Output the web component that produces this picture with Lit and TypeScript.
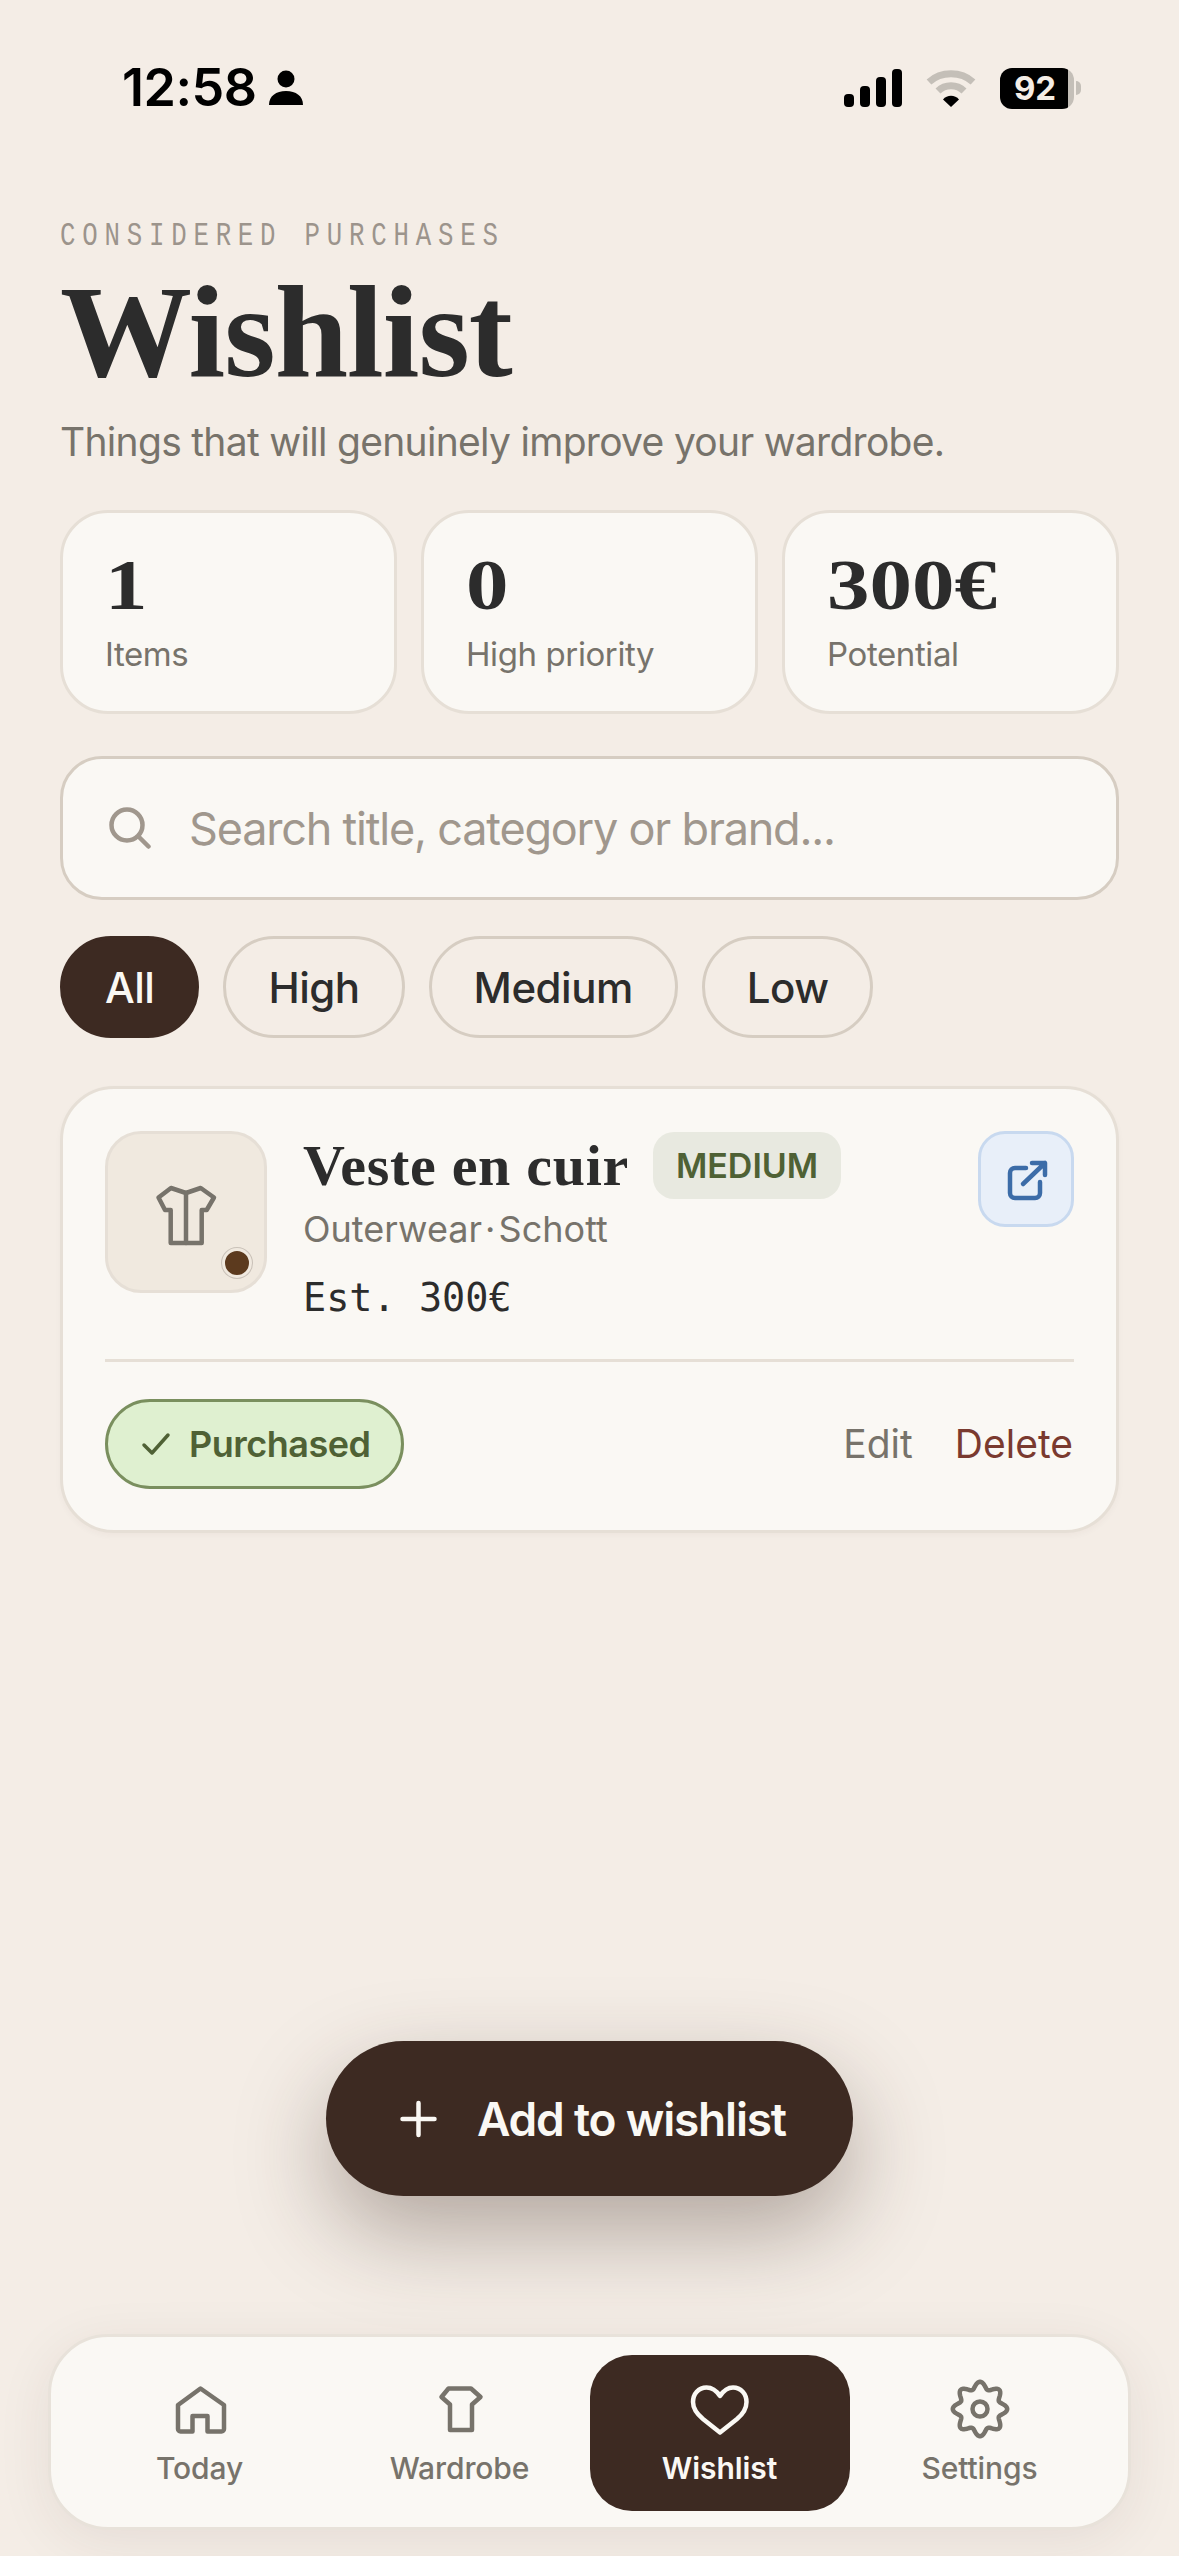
import { LitElement, html, css, svg } from "lit";
import { customElement } from "lit/decorators.js";

const gearPath = (() => {
  const pts: string[] = [];
  const n = 160;
  for (let i = 0; i <= n; i++) {
    const t = (i / n) * Math.PI * 2;
    const r = 23.8 + 3.4 * Math.cos(8 * t);
    pts.push(`${(36 + r * Math.sin(t)).toFixed(2)} ${(36 - r * Math.cos(t)).toFixed(2)}`);
  }
  return "M" + pts.join("L") + "Z";
})();

@customElement("app-root")
export class AppRoot extends LitElement {
  static styles = css`
    :host {
      display: block;
      position: relative;
      width: 1179px;
      height: 2556px;
      overflow: hidden;
      background: #f4ede6;
      font-family: Inter, "Liberation Sans", sans-serif;
      color: #2c2c2c;
    }
    svg { display: block; flex: none; fill: none; stroke-linecap: round; stroke-linejoin: round; }

    .status { display: flex; justify-content: space-between; align-items: center; height: 40px; padding: 68px 98px 0 122px; }
    .status-left { display: flex; align-items: center; gap: 12px; }
    .time { font-size: 52px; font-weight: 600; color: #000; letter-spacing: -0.5px; line-height: 40px; }
    .status-right { display: flex; align-items: center; gap: 24px; }
    .battery { display: flex; align-items: center; }
    .batt-body { width: 74px; height: 41px; border-radius: 12px; background: linear-gradient(90deg, #000 92%, #c4bfb8 92%); color: #f4ede6; font-size: 33px; font-weight: 700; display: flex; align-items: center; justify-content: center; padding-right: 4px; box-sizing: border-box; }
    .batt-tip { width: 5px; height: 14px; background: #c4bfb8; border-radius: 0 7px 7px 0; margin-left: 2px; }

    .content { padding: 111px 60px 0 60px; }
    .eyebrow { font-family: "Liberation Mono", monospace; font-size: 33px; letter-spacing: 8.7px; line-height: 36px; color: #9c948c; transform: scaleX(0.78); transform-origin: left center; white-space: nowrap; }
    h1 { margin: 0; font-family: "Liberation Serif", serif; font-weight: 700; font-size: 132px; line-height: 132px; margin-top: 11px; letter-spacing: -1px; color: #2c2c2c; }
    .sub { font-size: 39px; line-height: 52px; color: #77736b; margin-top: 18px; letter-spacing: -0.7px; }

    .stats { display: grid; grid-template-columns: repeat(3, 1fr); gap: 24px; margin-top: 42px; }
    .stat { height: 204px; box-sizing: border-box; border: 3px solid #e6dfd6; border-radius: 48px; background: #faf8f4; padding: 33px 42px; }
    .stat-value { font-family: "Liberation Serif", serif; font-weight: 700; font-size: 72px; line-height: 78px; transform: scaleX(1.18); transform-origin: left center; }
    .stat-label { font-size: 33px; line-height: 42px; color: #77736b; margin-top: 9px; letter-spacing: -0.4px; }

    .search { height: 144px; box-sizing: border-box; margin-top: 42px; border: 3px solid #d6cdc2; border-radius: 42px; background: #faf8f4; display: flex; align-items: center; gap: 38px; padding: 0 42px 0 46px; font-size: 45px; color: #a0978d; letter-spacing: -1.2px; }

    .chips { display: flex; gap: 24px; margin-top: 36px; }
    .chip { height: 102px; box-sizing: border-box; border: 3px solid #d6cdc2; border-radius: 51px; padding: 0 42px; display: flex; align-items: center; font-size: 42px; font-weight: 500; color: #2c2c2c; letter-spacing: -0.5px; }
    .chip.on { background: #3d2a22; border-color: #3d2a22; color: #faf8f4; }

    .card { margin-top: 48px; box-sizing: border-box; height: 447px; border: 3px solid #e6dfd6; border-radius: 54px; background: #faf8f4; padding: 42px 42px 0; box-shadow: 0 3px 6px rgba(60, 42, 33, 0.03); }
    .top { display: flex; gap: 36px; height: 228px; }
    .thumb { position: relative; width: 162px; height: 162px; box-sizing: border-box; border: 3px solid #e6dfd6; border-radius: 36px; background: #f0e9df; display: flex; align-items: center; justify-content: center; flex: none; }
    .dot { position: absolute; right: 12px; bottom: 12px; width: 24px; height: 24px; border-radius: 50%; background: #5c3a1e; border: 3px solid #f0e9df; box-shadow: 0 0 0 1px #c9c1b8; }
    .info { flex: 1; min-width: 0; }
    .title-row { display: flex; align-items: center; gap: 24px; height: 68px; }
    .title { font-family: "Liberation Serif", serif; font-weight: 700; font-size: 58px; letter-spacing: 0.7px; color: #2c2c2c; }
    .badge { height: 67px; box-sizing: border-box; padding: 0 23px; border-radius: 21px; background: #e8e9e0; color: #4f6135; font-weight: 600; font-size: 34px; display: flex; align-items: center; }
    .meta { font-size: 36px; line-height: 46px; color: #77736b; margin-top: 7px; letter-spacing: 0; word-spacing: -7px; }
    .price { font-family: "DejaVu Sans Mono", monospace; font-size: 38.5px; line-height: 46px; color: #2c2c2c; margin-top: 23px; }
    .ext { width: 96px; height: 96px; box-sizing: border-box; border: 3px solid #c8d9ef; border-radius: 27px; background: #e8eff9; display: flex; align-items: center; justify-content: center; flex: none; }
    .divider { height: 3px; background: #e6dfd6; }
    .bottom { display: flex; align-items: center; justify-content: space-between; margin-top: 37px; }
    .purchased { height: 90px; box-sizing: border-box; display: flex; align-items: center; gap: 15px; border: 3px solid #7a8f5e; border-radius: 45px; background: #dff0d0; color: #4f6135; font-weight: 600; font-size: 36px; padding: 0 31px 0 30px; letter-spacing: -0.5px; }
    .actions { display: flex; gap: 42px; font-size: 39px; color: #77736b; position: relative; top: -1px; left: -1px; }
    .del { color: #7a3a2f; }

    .fab { position: absolute; left: 326px; top: 2041px; width: 527px; height: 155px; box-sizing: border-box; padding-left: 69px; border-radius: 78px; background: #3d2a22; color: #faf8f4; display: flex; align-items: center; gap: 40px; font-size: 46px; font-weight: 600; letter-spacing: -1.2px; box-shadow: 0 36px 90px rgba(61, 42, 34, 0.36); }

    .nav { position: absolute; left: 48px; top: 2334px; width: 1083px; height: 196px; box-sizing: border-box; border: 3px solid #e8e2da; border-radius: 60px; background: #faf8f4; padding: 18px 18.5px 16px; display: grid; grid-template-columns: repeat(4, 1fr); box-shadow: 0 12px 54px rgba(61, 42, 34, 0.08); }
    .tab { display: flex; flex-direction: column; align-items: center; justify-content: flex-start; padding-top: 18px; border-radius: 42px; color: #77736b; font-size: 30px; line-height: 40px; font-weight: 500; letter-spacing: -0.1px; }
    .tab.on { background: #3d2a22; color: #faf8f4; font-weight: 600; }
    .tab span { margin-top: 3px; }
  `;

  private tab(label: string, icon: unknown, on = false) {
    return html`<div class="tab ${on ? "on" : ""}">${icon}<span>${label}</span></div>`;
  }

  render() {
    const grey = "#77736b";
    return html`
      <div class="status">
        <div class="status-left">
          <div class="time">12:58</div>
          <svg width="36" height="36" viewBox="0 0 36 36">
            <circle cx="18" cy="9" r="8.5" fill="#000"></circle>
            <path d="M1 35c0-9 7-14 17-14s17 5 17 14z" fill="#000"></path>
          </svg>
        </div>
        <div class="status-right">
          <svg width="58" height="38" viewBox="0 0 58 38">
            <rect x="0" y="25" width="10" height="13" rx="4" fill="#000"></rect>
            <rect x="16" y="17" width="10" height="21" rx="4" fill="#000"></rect>
            <rect x="32" y="8" width="10" height="30" rx="4" fill="#000"></rect>
            <rect x="48" y="0" width="10" height="38" rx="4" fill="#000"></rect>
          </svg>
          <svg width="50" height="38" viewBox="0 0 50 38">
            <path d="M3 13C15 2 35 2 47 13" stroke="#c4bfb8" stroke-width="7" stroke-linecap="butt"></path>
            <path d="M12 22C19 15 31 15 38 22" stroke="#c4bfb8" stroke-width="7" stroke-linecap="butt"></path>
            <path d="M17 30.5C21 25.5 29 25.5 33 30.5L25 38z" fill="#000"></path>
          </svg>
          <div class="battery"><div class="batt-body">92</div><div class="batt-tip"></div></div>
        </div>
      </div>

      <div class="content">
        <div class="eyebrow">CONSIDERED PURCHASES</div>
        <h1>Wishlist</h1>
        <div class="sub">Things that will genuinely improve your wardrobe.</div>

        <div class="stats">
          <div class="stat"><div class="stat-value">1</div><div class="stat-label">Items</div></div>
          <div class="stat"><div class="stat-value">0</div><div class="stat-label">High priority</div></div>
          <div class="stat"><div class="stat-value">300€</div><div class="stat-label">Potential</div></div>
        </div>

        <div class="search">
          <svg width="42" height="42" viewBox="0 0 42 42" stroke="#a0978d" stroke-width="4.5">
            <circle cx="18" cy="18" r="15.5"></circle>
            <path d="M29.5 29.5L39.5 39.5"></path>
          </svg>
          <span>Search title, category or brand...</span>
        </div>

        <div class="chips">
          <div class="chip on">All</div>
          <div class="chip">High</div>
          <div class="chip">Medium</div>
          <div class="chip">Low</div>
        </div>

        <div class="card">
          <div class="top">
            <div class="thumb">
              <svg width="72" height="72" viewBox="0 0 72 72" stroke="${grey}" stroke-width="4.5">
                <path d="M36 17L21 12L8.500 21.500L15 34H20.700V67H51.700V34H56.700L64 21.500L50.700 12Z"></path>
                <path d="M36 17V67"></path>
              </svg>
              <div class="dot"></div>
            </div>
            <div class="info">
              <div class="title-row">
                <div class="title">Veste en cuir</div>
                <div class="badge">MEDIUM</div>
              </div>
              <div class="meta">Outerwear · Schott</div>
              <div class="price">Est. 300€</div>
            </div>
            <div class="ext">
              <svg width="48" height="48" viewBox="0 0 48 48" stroke="#3c6ca8" stroke-width="4.500">
                <path d="M24 13H13a5 5 0 0 0-5 5v20a5 5 0 0 0 5 5h20a5 5 0 0 0 5-5V27"></path>
                <path d="M21 29L43 8M30 8H43V20"></path>
              </svg>
            </div>
          </div>
          <div class="divider"></div>
          <div class="bottom">
            <div class="purchased">
              <svg width="36" height="36" viewBox="0 0 36 36" stroke="#4f6135" stroke-width="3.500">
                <path d="M6 19L14 27L30 9"></path>
              </svg>
              <span>Purchased</span>
            </div>
            <div class="actions"><span>Edit</span><span class="del">Delete</span></div>
          </div>
        </div>
      </div>

      <div class="fab">
        <svg width="42" height="42" viewBox="0 0 42 42" stroke="#faf8f4" stroke-width="4.500">
          <path d="M23.500 5V37M7.500 21H39.500"></path>
        </svg>
        <span>Add to wishlist</span>
      </div>

      <div class="nav">
        ${this.tab("Today", html`<svg width="72" height="72" viewBox="0 0 72 72" stroke="${grey}" stroke-width="4.5">
          <path d="M14 32L36.500 15.500L60 32V56a2.500 2.500 0 0 1-2.500 2.500H43.500V43H28.500V58.500H16.500a2.500 2.500 0 0 1-2.500-2.500Z"></path>
        </svg>`)}
        ${this.tab("Wardrobe", html`<svg width="72" height="72" viewBox="0 0 72 72" stroke="${grey}" stroke-width="4.5">
          <path d="M24.500 15.500H47L56.500 24L48 31.500V57H26V31.500L17.500 24Z"></path>
        </svg>`)}
        ${this.tab("Wishlist", html`<svg width="72" height="72" viewBox="0 0 72 72" stroke="#faf8f4" stroke-width="4.5">
          <path d="M36 23C32 17 27 14.500 22.500 14.500C14.500 14.500 9 21 9 29C9 36 13 41 19 46L36 59.500L53 46C59 41 62.500 36 62.500 29C62.500 21 57 14.500 49 14.500C44.500 14.500 40 17 36 23Z"></path>
        </svg>`, true)}
        ${this.tab("Settings", html`<svg width="72" height="72" viewBox="0 0 72 72" stroke="${grey}" stroke-width="4.5">
          ${svg`<path d="${gearPath}"></path><circle cx="36" cy="36" r="7.5"></circle>`}
        </svg>`)}
      </div>
    `;
  }
}
